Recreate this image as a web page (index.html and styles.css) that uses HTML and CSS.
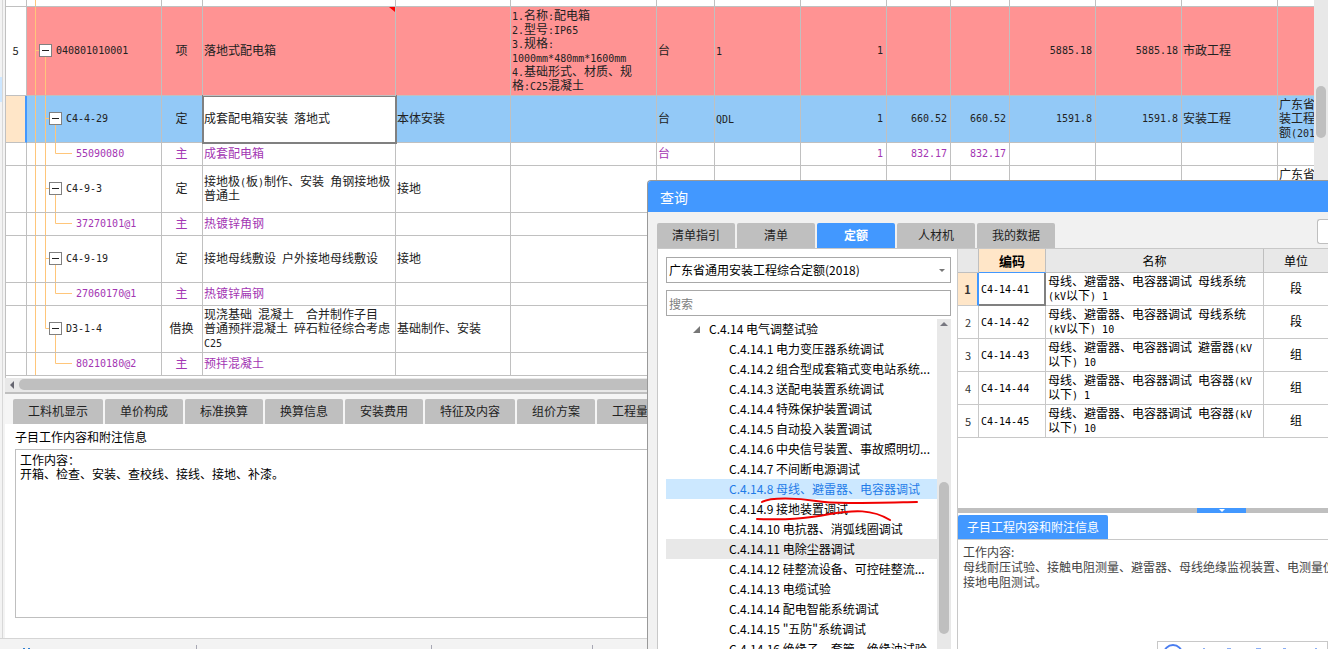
FILE: index.html
```html
<!DOCTYPE html>
<html lang="zh-CN">
<head>
<meta charset="utf-8">
<title>查询</title>
<link rel="stylesheet" href="styles.css">
</head>
<body>
<div class="app">
  <div class="workspace">
    <div class="rail"><div class="rail-mark"></div></div>
    <main class="main">
      <div class="grid-area">
        <div class="grid-wrap">
          <table class="grid">
            <colgroup><col class="w21"><col class="w135"><col class="w41"><col class="w193"><col class="w115"><col class="w146"><col class="w58"><col class="w86"><col class="w86"><col class="w64"><col class="w59"><col class="w86"><col class="w86"><col class="w96"><col class="w135"></colgroup>
            <tbody>
            <tr class="stub"><td></td><td><div class="tree"><svg width="50" height="6"><path d="M8.5 0V6"/></svg></div></td><td></td><td></td><td></td><td></td><td></td><td></td><td></td><td></td><td></td><td></td><td></td><td></td><td></td></tr>
            <tr class="tall item">
              <td class="c head">5</td>
              <td><div class="tree l1"><svg width="50" height="88"><path d="M8.5 0V88M8.5 43.5H12M18.5 50V88"/><rect x="12.5" y="37.5" width="12" height="12"/><path class="minus" d="M15 43.5H22"/></svg><span class="m">040801010001</span></div></td>
              <td class="c">项</td><td class="note">落地式配电箱<svg class="corner" width="6" height="5"><path d="M0 0H6V5Z"/></svg></td><td></td>
              <td><span class="m">1.</span>名称<span class="m">:</span>配电箱<br><span class="m">2.</span>型号<span class="m">:IP65</span><br><span class="m">3.</span>规格<span class="m">:</span><br><span class="m">1000mm*480mm*1600mm</span><br><span class="m">4.</span>基础形式、材质、规<br>格<span class="m">:C25</span>混凝土</td>
              <td>台</td><td><span class="m">1</span></td><td class="n">1</td><td></td><td></td><td class="n">5885.18</td><td class="n">5885.18</td><td>市政工程</td><td></td>
            </tr>
            <tr class="mid selected">
              <td class="head"></td>
              <td><div class="tree l2"><svg width="50" height="46"><path d="M8.5 0V46M18.5 0V46M18.5 22.5H22M28.5 29V46"/><rect x="22.5" y="16.5" width="12" height="12"/><path class="minus" d="M25 22.5H32"/></svg><span class="m">C4-4-29</span></div></td>
              <td class="c">定</td><td class="editing">成套配电箱安装<span class="m"> </span>落地式</td><td>本体安装</td><td></td><td>台</td><td><span class="m">QDL</span></td><td class="n">1</td><td class="n">660.52</td><td class="n">660.52</td><td class="n">1591.8</td><td class="n">1591.8</td><td>安装工程</td><td>广东省通用安<br>装工程综合定<br>额<span class="m">(2018)</span></td>
            </tr>
            <tr class="low material">
              <td></td>
              <td><div class="tree l3"><svg width="50" height="22"><path d="M8.5 0V22M18.5 0V22M28.5 0V10.5H45"/></svg><span class="m">55090080</span></div></td>
              <td class="c">主</td><td>成套配电箱</td><td></td><td></td><td>台</td><td></td><td class="n">1</td><td class="n">832.17</td><td class="n">832.17</td><td></td><td></td><td></td><td></td>
            </tr>
            <tr class="mid">
              <td></td>
              <td><div class="tree l2"><svg width="50" height="46"><path d="M8.5 0V46M18.5 0V46M18.5 22.5H22M28.5 29V46"/><rect x="22.5" y="16.5" width="12" height="12"/><path class="minus" d="M25 22.5H32"/></svg><span class="m">C4-9-3</span></div></td>
              <td class="c">定</td><td>接地极<span class="m">(</span>板<span class="m">)</span>制作、安装<span class="m"> </span>角钢接地极<br>普通土</td><td>接地</td><td></td><td></td><td></td><td></td><td></td><td></td><td></td><td></td><td></td><td>广东省通用安<br>装工程综合定<br>额<span class="m">(2018)</span></td>
            </tr>
            <tr class="low material">
              <td></td>
              <td><div class="tree l3"><svg width="50" height="22"><path d="M8.5 0V22M18.5 0V22M28.5 0V10.5H45"/></svg><span class="m">37270101@1</span></div></td>
              <td class="c">主</td><td>热镀锌角钢</td><td></td><td></td><td></td><td></td><td></td><td></td><td></td><td></td><td></td><td></td><td></td>
            </tr>
            <tr class="mid">
              <td></td>
              <td><div class="tree l2"><svg width="50" height="46"><path d="M8.5 0V46M18.5 0V46M18.5 22.5H22M28.5 29V46"/><rect x="22.5" y="16.5" width="12" height="12"/><path class="minus" d="M25 22.5H32"/></svg><span class="m">C4-9-19</span></div></td>
              <td class="c">定</td><td>接地母线敷设<span class="m"> </span>户外接地母线敷设</td><td>接地</td><td></td><td></td><td></td><td></td><td></td><td></td><td></td><td></td><td></td><td></td>
            </tr>
            <tr class="low material">
              <td></td>
              <td><div class="tree l3"><svg width="50" height="22"><path d="M8.5 0V22M18.5 0V22M28.5 0V10.5H45"/></svg><span class="m">27060170@1</span></div></td>
              <td class="c">主</td><td>热镀锌扁钢</td><td></td><td></td><td></td><td></td><td></td><td></td><td></td><td></td><td></td><td></td><td></td>
            </tr>
            <tr class="mid">
              <td></td>
              <td><div class="tree l2"><svg width="50" height="46"><path d="M8.5 0V46M18.5 0V22.5H22M28.5 29V46"/><rect x="22.5" y="16.5" width="12" height="12"/><path class="minus" d="M25 22.5H32"/></svg><span class="m">D3-1-4</span></div></td>
              <td class="c">借换</td><td>现浇基础<span class="m"> </span>混凝土<span class="m">  </span>合并制作子目<br>普通预拌混凝土<span class="m"> </span>碎石粒径综合考虑<br><span class="m">C25</span></td><td>基础制作、安装</td><td></td><td></td><td></td><td></td><td></td><td></td><td></td><td></td><td></td><td></td>
            </tr>
            <tr class="low material">
              <td></td>
              <td><div class="tree l3"><svg width="50" height="22"><path d="M8.5 0V22M28.5 0V10.5H45"/></svg><span class="m">80210180@2</span></div></td>
              <td class="c">主</td><td>预拌混凝土</td><td></td><td></td><td></td><td></td><td></td><td></td><td></td><td></td><td></td><td></td><td></td>
            </tr>
            </tbody>
          </table>
        </div>
        <div class="vscroll"><div class="vthumb"></div></div>
      </div>
      <div class="hscroll"><svg width="14" height="12"><path d="M9 2V10L5 6Z" fill="#666670"/></svg><div class="hthumb"></div></div>
      <nav class="tabs lower-tabs">
        <button class="wide">工料机显示</button><button>单价构成</button><button>标准换算</button><button>换算信息</button><button>安装费用</button><button class="wide">特征及内容</button><button>组价方案</button><button class="wide">工程量明细</button>
      </nav>
      <section class="notes">
        <label for="work">子目工作内容和附注信息</label>
        <textarea id="work" spellcheck="false">工作内容：
开箱、检查、安装、查校线、接线、接地、补漆。</textarea>
      </section>
    </main>
  </div>
  <footer class="status"><span class="s1"><svg width="30" height="4"><path d="M23 3.500H25M28 3.500H30" stroke="#2f7fd0"/></svg></span><span class="s2"></span><span class="s3"></span></footer>

  <section class="dialog" aria-label="查询">
    <header class="title">查询</header>
    <div class="dialog-top">
      <nav class="tabs"><button>清单指引</button><button>清单</button><button class="active">定额</button><button>人材机</button><button>我的数据</button></nav>
      <input class="top-search" aria-label="查找">
    </div>
    <div class="dialog-body">
      <div class="catalog">
        <div class="select-box">
          <select aria-label="定额库"><option>广东省通用安装工程综合定额(2018)</option></select>
          <svg class="caret" width="6" height="4"><path d="M0 0H6L3 3Z" fill="#777"/></svg>
        </div>
        <input class="search" placeholder="搜索" aria-label="搜索">
        <div class="list-area">
          <ul class="list">
            <li class="parent"><svg width="7" height="7"><path d="M7 0V7H0Z" fill="#777"/></svg>C.4.14 电气调整试验</li>
            <li>C.4.14.1 电力变压器系统调试</li>
            <li>C.4.14.2 组合型成套箱式变电站系统...</li>
            <li>C.4.14.3 送配电装置系统调试</li>
            <li>C.4.14.4 特殊保护装置调试</li>
            <li>C.4.14.5 自动投入装置调试</li>
            <li>C.4.14.6 中央信号装置、事故照明切...</li>
            <li>C.4.14.7 不间断电源调试</li>
            <li class="current">C.4.14.8 母线、避雷器、电容器调试</li>
            <li>C.4.14.9 接地装置调试</li>
            <li>C.4.14.10 电抗器、消弧线圈调试</li>
            <li class="hover">C.4.14.11 电除尘器调试</li>
            <li>C.4.14.12 硅整流设备、可控硅整流...</li>
            <li>C.4.14.13 电缆试验</li>
            <li>C.4.14.14 配电智能系统调试</li>
            <li>C.4.14.15 "五防"系统调试</li>
            <li>C.4.14.16 绝缘子、套管、绝缘油试验</li>
          </ul>
          <div class="list-scroll"><svg width="14" height="10"><path d="M3 7H11L7 3Z" fill="#777780"/></svg><div class="list-thumb"></div></div>
          <svg class="marks" width="150" height="30"><path d="M6 7C14 2 42 3 60 6S110 8 161 7M1 24C30 25 48 24 74 19C98 15 116 14 134 25"/></svg>
        </div>
      </div>
      <div class="detail">
        <table class="results">
          <colgroup><col class="w21"><col class="w67"><col class="w218"><col></colgroup>
          <thead><tr><th></th><th class="sorted">编码</th><th>名称</th><th>单位</th></tr></thead>
          <tbody>
            <tr class="on"><th>1</th><td class="cursor"><span class="m">C4-14-41</span></td><td>母线、避雷器、电容器调试<span class="m"> </span>母线系统<br><span class="m">(kV</span>以下<span class="m">) 1</span></td><td class="c">段</td></tr>
            <tr><th>2</th><td><span class="m">C4-14-42</span></td><td>母线、避雷器、电容器调试<span class="m"> </span>母线系统<br><span class="m">(kV</span>以下<span class="m">) 10</span></td><td class="c">段</td></tr>
            <tr><th>3</th><td><span class="m">C4-14-43</span></td><td>母线、避雷器、电容器调试<span class="m"> </span>避雷器<span class="m">(kV</span><br>以下<span class="m">) 10</span></td><td class="c">组</td></tr>
            <tr><th>4</th><td><span class="m">C4-14-44</span></td><td>母线、避雷器、电容器调试<span class="m"> </span>电容器<span class="m">(kV</span><br>以下<span class="m">) 1</span></td><td class="c">组</td></tr>
            <tr><th>5</th><td><span class="m">C4-14-45</span></td><td>母线、避雷器、电容器调试<span class="m"> </span>电容器<span class="m">(kV</span><br>以下<span class="m">) 10</span></td><td class="c">组</td></tr>
          </tbody>
        </table>
        <div class="splitter"><button aria-label="折叠"><svg width="6" height="3"><path d="M0 0H6L3 3Z" fill="#fff"/></svg></button></div>
        <div class="info-tab"><button>子目工程内容和附注信息</button></div>
        <div class="info">工作内容:<br>母线耐压试验、接触电阻测量、避雷器、母线绝缘监视装置、电测量仪表、保护装置<br>接地电阻测试。</div>
      </div>
    </div>
    <div class="float-box"><svg width="168" height="20"><circle cx="15" cy="12" r="9" fill="none" stroke="#4a7df0" stroke-width="2"/><path d="M45 6.500H47M69 6.500H73M98 6.500H103M125 6.500H128M157 6.500H159" stroke="#8aaef5" fill="none"/></svg></div>
  </section>
</div>
</body>
</html>
```
FILE: styles.css
```css
* { box-sizing: border-box; }
body { margin: 0; overflow: hidden; font: 12px/14px "Noto Sans CJK SC", sans-serif; color: #222; background: #fff; }
button, input, select, textarea { font: inherit; color: inherit; border-radius: 0; }
.m { font-family: "DejaVu Sans Mono", monospace; font-size: 10px; line-height: 10px; white-space: pre; }

.app { position: relative; display: flex; flex-direction: column; height: 100vh; overflow: hidden; }
.workspace { flex: 1; display: flex; min-height: 0; }
.rail { flex: none; width: 5px; padding-top: 77px; background: linear-gradient(90deg, #f3f3f3 2px, #d8d8d8 2px, #d8d8d8 3px, #f3f3f3 3px); }
.rail-mark { width: 2px; height: 25px; background: #cce6ff; }
.main { flex: 1; min-width: 0; display: flex; flex-direction: column; }

/* Bill grid */
.grid-area { display: flex; height: 378px; }
.grid-wrap { flex: 1; min-width: 0; overflow: hidden; border-left: 1px solid #c0c0c0; }
.grid { width: 1407px; table-layout: fixed; border-collapse: separate; border-spacing: 0; }
.grid td { padding: 0 0 2px 1px; border: solid #c0c0c0; border-width: 0 1px 1px 0; white-space: nowrap; }
.grid td:nth-child(2), .grid .stub td { padding: 0; }
.w21 { width: 21px; } .w41 { width: 41px; } .w58 { width: 58px; } .w59 { width: 59px; }
.w64 { width: 64px; } .w67 { width: 67px; } .w86 { width: 86px; } .w96 { width: 96px; }
.w115 { width: 115px; } .w135 { width: 135px; } .w146 { width: 146px; } .w193 { width: 193px; } .w218 { width: 218px; }
.grid td.c { padding: 0 1px 2px 0; text-align: center; }
.results td.c { padding: 0 0 2px; text-align: center; }
.grid td.n { padding: 0 3px 0 0; text-align: right; font: 10px/14px "DejaVu Sans Mono", monospace; }
.stub { height: 7px; }
.stub .tree { height: 6px; }
.tall { height: 89px; }
.mid { height: 47px; }
.low { height: 23px; }
.tall .tree { height: 88px; }
.mid .tree { height: 46px; }
.low .tree { height: 22px; }
.item td { background: #ff9393; }
.item td.head { background: #fff; font-size: 11px; }
.selected td { background: #93c9f7; }
.selected td.head { background: #ffe6c8; border-right: 2px solid #4298ff; }
.selected td.editing { background: #fff; outline: 2px solid #808080; outline-offset: -1px; }
.material td { color: #a336b3; }
.note { position: relative; }
.corner { position: absolute; top: 0; right: 0; fill: #f00; }
.tree { display: flex; align-items: center; overflow: hidden; }
.tree svg { flex: none; fill: none; stroke: #ffc67a; }
.tree rect { fill: #fff; stroke: #808080; }
.tree .minus { stroke: #222; }
.l1 .m { margin-left: -21px; }
.l2 .m { margin-left: -11px; }
.l3 .m { margin-left: -1px; }

.vscroll { flex: none; width: 14px; padding: 86px 2px 0; background: #e8e8e8; }
.vthumb { height: 52px; border-radius: 5px; background: #bfbfbf; }
.hscroll { flex: none; height: 16px; display: flex; background: #e8e8e8; border-bottom: 2px solid #bfbfbf; padding-top: 1px; }
.hthumb { flex: 1; height: 11px; border-radius: 5px; background: #bfbfbf; }

/* Tabs */
.tabs { display: flex; gap: 2px; }
.tabs button { flex: none; width: 78px; height: 25px; padding: 0 0 2px; border: 0; border-radius: 2px 2px 0 0; background: #bfbfbf; color: #222; }
.tabs button.wide { width: 90px; }
.tabs button.active { background: #4298ff; color: #fff; font-weight: bold; }
.lower-tabs { flex: none; padding: 5px 8px 0; background: #f5f5f5; overflow: hidden; }

.notes { flex: 1; display: flex; flex-direction: column; gap: 5px; padding: 6px 10px 20px; color: #000; }
.notes textarea { flex: 1; margin: 0; padding: 3px 4px; border: 1px solid #bfbfbf; resize: none; outline: 0; }
.status { flex: none; height: 11px; display: flex; padding-top: 6px; background: #f3f3f3; border-top: 1px solid #d5d5d5; }
.status span { border-right: 1px solid #a8a8b4; }
.status svg { display: block; }
.s1 { width: 197px; } .s2 { width: 235px; } .s3 { width: 161px; }

/* Query dialog */
.dialog { position: absolute; left: 647px; top: 180px; right: 0; bottom: 0; display: flex; flex-direction: column; overflow: hidden; background: #f1f1f1; border: solid #999; border-width: 1px 0 0 1px; border-radius: 4px 0 0 0; }
.title { flex: none; height: 31px; padding: 0 12px; background: #4298ff; color: #fff; font-size: 14px; line-height: 33px; }
.dialog-top { flex: none; display: flex; justify-content: space-between; padding: 7px 0 0 9px; }
.dialog-top .tabs { padding-top: 4px; }
.top-search { width: 11px; height: 25px; padding: 0; border: 1px solid #bfbfbf; border-right: 0; border-radius: 3px 0 0 3px; background: #fff; }
.dialog-body { flex: 1; min-height: 0; display: flex; margin-left: 9px; background: #fff; border: solid #c8c8c8; border-width: 1px 0 0 1px; color: #000; }
.catalog { flex: none; width: 299px; padding: 8px 6px 0 8px; display: flex; flex-direction: column; }
.select-box { position: relative; display: flex; margin-bottom: 7px; }
.select-box select { flex: 1; height: 26px; padding: 0 2px; border: 1px solid #a8a8a8; background: #fff; appearance: none; outline: 0; }
.caret { position: absolute; right: 6px; top: 12px; }
.search { height: 26px; margin-bottom: 3px; padding: 0 2px; border: 1px solid #a8a8a8; outline: 0; }
.search::placeholder { color: #808080; opacity: 1; }
.list-area { position: relative; flex: 1; min-height: 0; display: flex; }
.list { flex: 1; margin: 0; padding: 0; list-style: none; overflow: hidden; }
.list li { height: 20px; padding-left: 63px; line-height: 20px; white-space: nowrap; }
.list .parent { display: flex; align-items: center; gap: 9px; padding-left: 27px; }
.list .current { background: #cce8ff; color: #1f7be8; }
.list .hover { background: #e8e8e8; }
.list-scroll { flex: none; width: 14px; background: #e8e8e8; }
.list-scroll svg { display: block; }
.list-thumb { width: 10px; height: 152px; margin: 153px 2px 0; border-radius: 5px; background: #bfbfbf; }
.marks { position: absolute; left: 90px; top: 176px; overflow: visible; fill: none; stroke: #f00000; stroke-width: 2; stroke-linecap: round; }

.detail { flex: 1; min-width: 0; display: flex; flex-direction: column; border-left: 1px solid #c8c8c8; }
.results { width: 100%; table-layout: fixed; border-collapse: separate; border-spacing: 0; }
.results th, .results td { padding: 0 0 2px 2px; border: solid #c8c8c8; border-width: 0 1px 1px 0; text-align: left; white-space: nowrap; }
.results th:last-child, .results td:last-child { border-right: 0; }
.results thead th { height: 24px; padding: 0; background: #e8e8e8; border-color: #bfbfbf; text-align: center; font-weight: normal; }
.results thead .sorted { background: #ffe6c8; border-bottom-color: #4298ff; font-size: 13px; font-weight: bold; }
.results tbody tr { height: 33px; }
.results tbody th { padding: 0; text-align: center; font-size: 11px; font-weight: normal; color: #333; }
.results tbody .on th { background: #ffe6c8; border-right: 2px solid #4298ff; font-weight: bold; }
.results .cursor { border-right: 2px solid #808080; border-bottom: 2px solid #808080; }
.splitter { flex: none; height: 5px; margin-top: 70px; display: flex; justify-content: center; padding-left: 157px; background: #bfbfbf; }
.splitter button { width: 49px; height: 5px; padding: 0; border: 0; display: flex; justify-content: center; align-items: center; background: #4298ff; }
.info-tab { flex: none; margin-top: 2px; border-bottom: 1px solid #c8c8c8; display: flex; }
.info-tab button { width: 150px; height: 24px; padding: 0; border: 0; border-radius: 2px 2px 0 0; background: #4298ff; color: #fff; }
.info { padding: 4px 5px; line-height: 15px; color: #444; white-space: nowrap; }
.float-box { position: absolute; right: 0; bottom: 0; width: 171px; height: 8px; overflow: hidden; background: #fff; border: solid #c8c8c8; border-width: 1px 1px 0 1px; }
```
